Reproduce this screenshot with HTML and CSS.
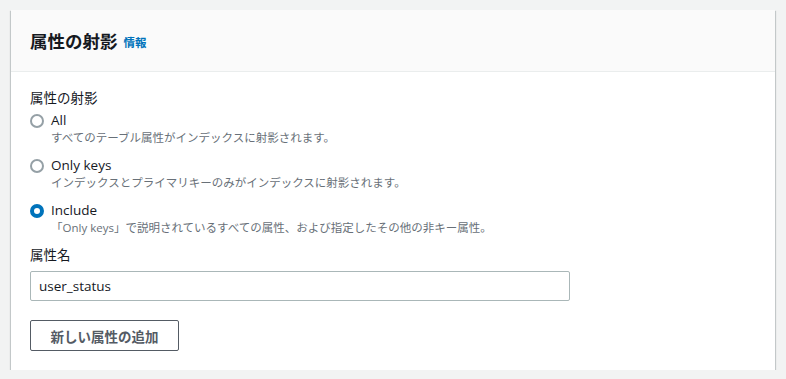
FILE: index.html
```html
<!DOCTYPE html>
<html lang="ja">
  <head>
    <meta charset="UTF-8" />
    <title>属性の射影</title>
    <link rel="stylesheet" href="styles.css">
  </head>
  <body>
    <div class="panel">
      <!-- ヘッダー -->
      <header class="panel-header">
        <h2 class="panel-title">属性の射影</h2>
        <a class="info-link" href="#">情報</a>
      </header>

      <div class="panel-body">
        <div class="field-label">属性の射影</div>

        <div class="radio-group">
          <label class="radio-item">
            <span class="radio"></span>
            <span class="radio-text">
              <span class="radio-title">All</span>
              <span class="radio-desc">すべてのテーブル属性がインデックスに射影されます。</span>
            </span>
          </label>
          <label class="radio-item">
            <span class="radio"></span>
            <span class="radio-text">
              <span class="radio-title">Only keys</span>
              <span class="radio-desc">インデックスとプライマリキーのみがインデックスに射影されます。</span>
            </span>
          </label>
          <label class="radio-item">
            <span class="radio radio-checked"></span>
            <span class="radio-text">
              <span class="radio-title">Include</span>
              <span class="radio-desc">「Only keys」で説明されているすべての属性、および指定したその他の非キー属性。</span>
            </span>
          </label>
        </div>

        <!-- 属性名 -->
        <div class="field-label attr-label">属性名</div>
        <div class="text-input">user_status</div>

        <button class="add-button">新しい属性の追加</button>
      </div>
    </div>
  </body>
</html>
```

FILE: styles.css
```css
html,
body {
  margin: 0;
  padding: 0;
  background-color: #f2f3f3;
  font-family: "Open Sans", "Noto Sans CJK JP", sans-serif;
  color: #16191f;
}

.panel {
  width: 764px;
  margin: 10px 0 0 11px;
  background-color: #fff;
  box-shadow: 0 1px 1px 0 rgba(0, 28, 36, 0.3), 1px 1px 1px 0 rgba(0, 28, 36, 0.15),
    -1px 1px 1px 0 rgba(0, 28, 36, 0.15);
}

.panel-header {
  display: flex;
  align-items: center;
  gap: 6px;
  height: 61px;
  padding: 0 19px;
  background-color: #fafafa;
  border-bottom: 1px solid #eaeded;
}

.panel-title {
  margin: 0;
  font-size: 17.5px;
  font-weight: 700;
  line-height: 22px;
  font-family: "Noto Sans CJK JP", sans-serif;
}

.info-link {
  font-size: 11.5px;
  font-weight: 700;
  color: #0073bb;
  text-decoration: none;
  font-family: "Noto Sans CJK JP", sans-serif;
  margin-top: 3px;
}

.panel-body {
  display: flex;
  flex-direction: column;
  align-items: flex-start;
  padding: 16px 19px 19px;
}

.field-label {
  font-size: 13.5px;
  line-height: 20px;
  color: #16191f;
}

.radio-group {
  display: flex;
  flex-direction: column;
  gap: 9px;
  margin-top: 2px;
}

.radio-item {
  display: flex;
  gap: 7px;
  align-items: flex-start;
}

.radio {
  width: 14px;
  height: 14px;
  margin-top: 4px;
  box-sizing: border-box;
  border: 2px solid #95a0a6;
  border-radius: 50%;
  background-color: #fff;
}

/* 選択中 */
.radio-checked {
  border: 4px solid #0073bb;
}

.radio-text {
  display: flex;
  flex-direction: column;
}

.radio-title {
  font-size: 13.5px;
  line-height: 20px;
  color: #16191f;
}

.radio-desc {
  font-size: 11.5px;
  line-height: 16px;
  color: #687078;
}

.attr-label {
  margin-top: 9px;
}

.text-input {
  width: 540px;
  height: 30px;
  margin-top: 6px;
  box-sizing: border-box;
  padding: 0 8px;
  border: 1px solid #aab7b8;
  border-radius: 2px;
  font-size: 13.5px;
  line-height: 28px;
  color: #16191f;
}

.add-button {
  width: 149px;
  height: 31px;
  margin-top: 19px;
  padding: 0;
  background-color: #fff;
  border: 1px solid #545b64;
  border-radius: 2px;
  font-family: "Noto Sans CJK JP", sans-serif;
  font-size: 13.5px;
  font-weight: 700;
  color: #545b64;
}
```
